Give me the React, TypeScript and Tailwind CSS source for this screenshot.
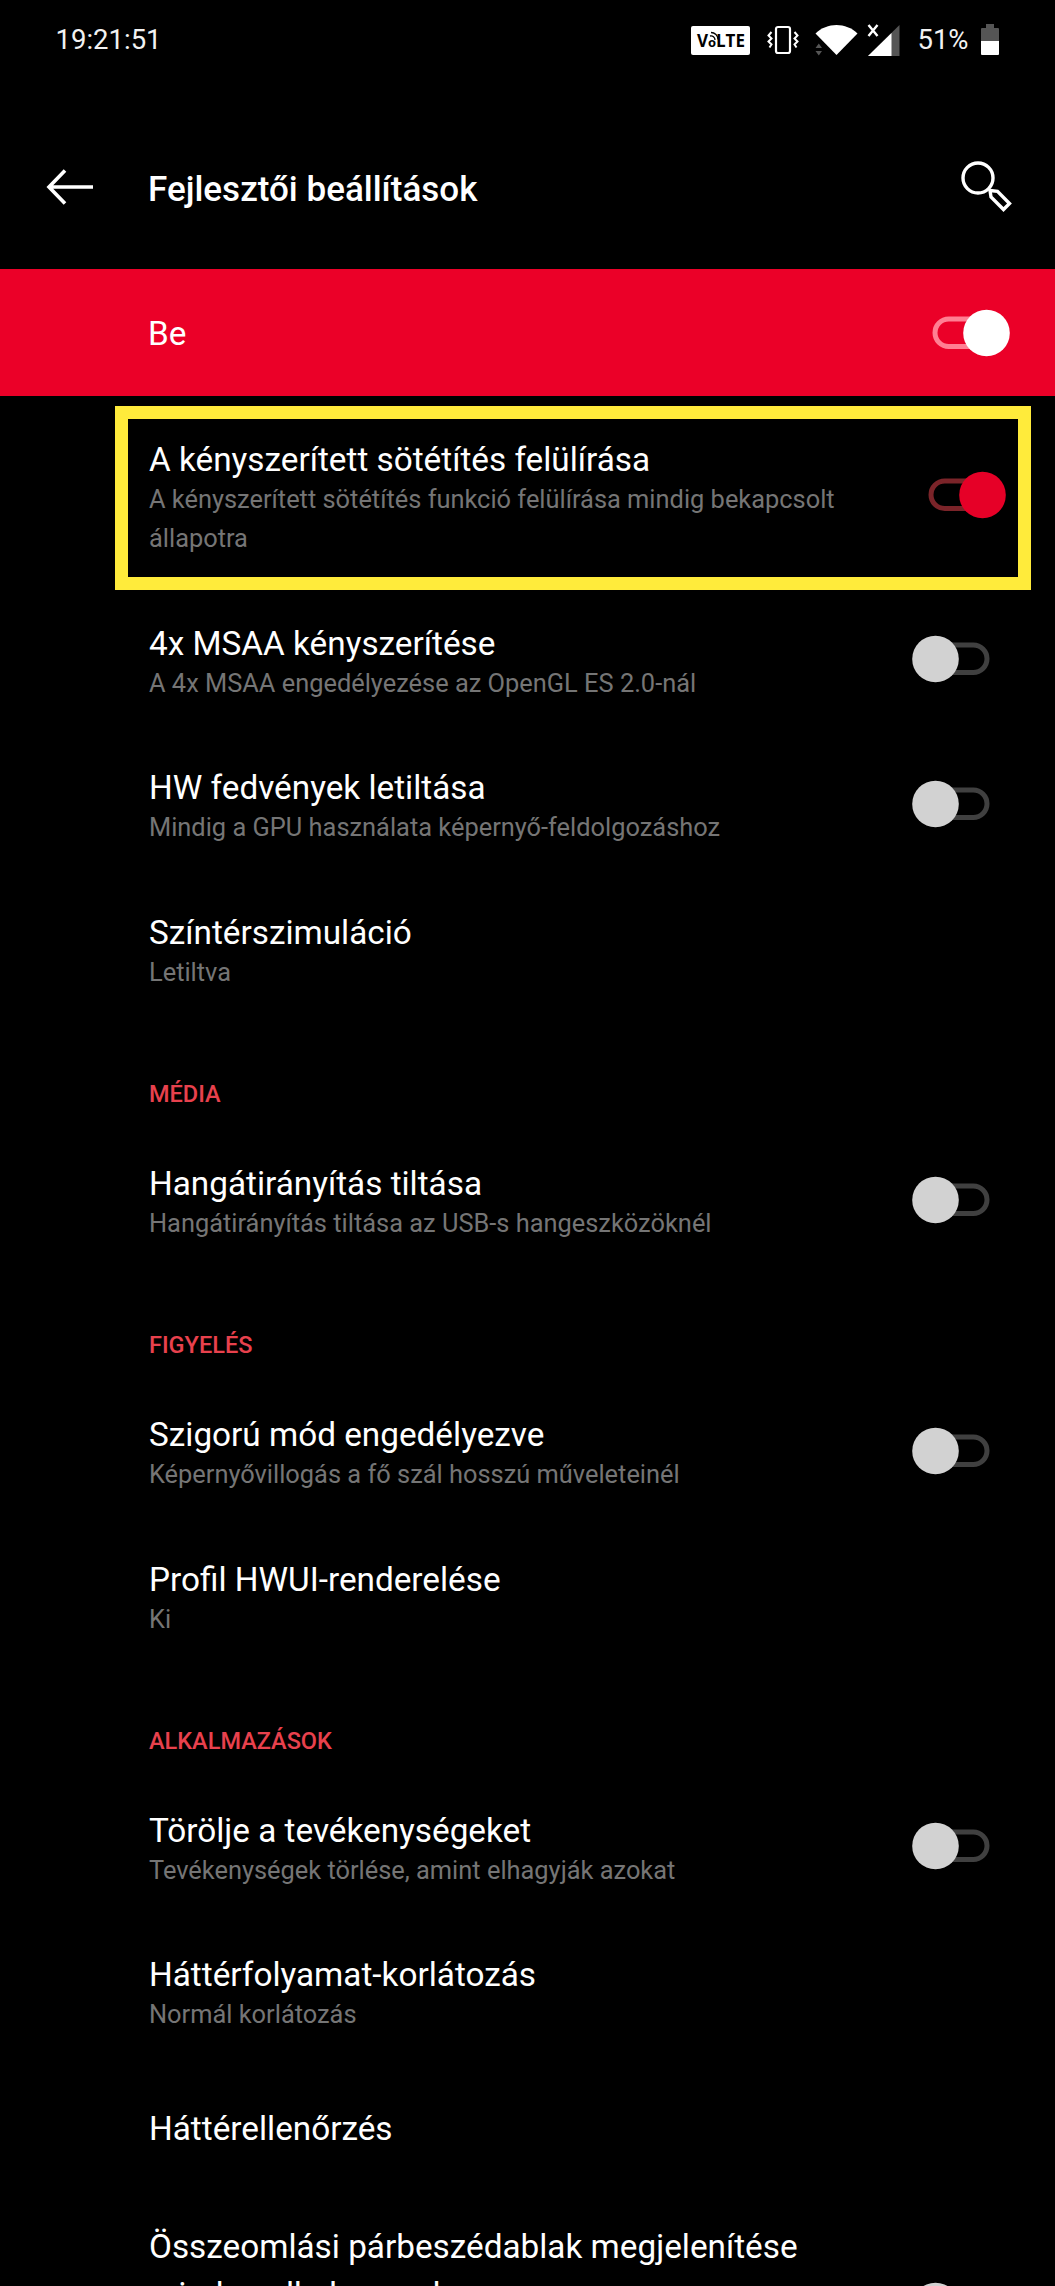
import { useState } from 'react'

type Item = {
  id: string
  title: string
  summary?: string
  toggle?: boolean
  tall?: boolean
}

type Section = {
  label?: string
  items: Item[]
}

const sections: Section[] = [
  {
    items: [
      {
        id: 'force-dark',
        title: 'A kényszerített sötétítés felülírása',
        summary: 'A kényszerített sötétítés funkció felülírása mindig bekapcsolt állapotra',
        toggle: true,
      },
      { id: 'msaa', title: '4x MSAA kényszerítése', summary: 'A 4x MSAA engedélyezése az OpenGL ES 2.0-nál', toggle: true },
      { id: 'hw', title: 'HW fedvények letiltása', summary: 'Mindig a GPU használata képernyő-feldolgozáshoz', toggle: true },
      { id: 'color', title: 'Színtérszimuláció', summary: 'Letiltva' },
    ],
  },
  {
    label: 'Média',
    items: [
      { id: 'usb', title: 'Hangátirányítás tiltása', summary: 'Hangátirányítás tiltása az USB-s hangeszközöknél', toggle: true },
    ],
  },
  {
    label: 'Figyelés',
    items: [
      { id: 'strict', title: 'Szigorú mód engedélyezve', summary: 'Képernyővillogás a fő szál hosszú műveleteinél', toggle: true },
      { id: 'hwui', title: 'Profil HWUI-renderelése', summary: 'Ki' },
    ],
  },
  {
    label: 'Alkalmazások',
    items: [
      { id: 'destroy', title: 'Törölje a tevékenységeket', summary: 'Tevékenységek törlése, amint elhagyják azokat', toggle: true },
      { id: 'bg-limit', title: 'Háttérfolyamat-korlátozás', summary: 'Normál korlátozás' },
      { id: 'bg-check', title: 'Háttérellenőrzés' },
      { id: 'crash', title: 'Összeomlási párbeszédablak megjelenítése minden alkalommal', toggle: true, tall: true },
    ],
  },
]

function Switch({ on, light, onClick }: { on: boolean; light?: boolean; onClick: () => void }) {
  const track = light ? '#ff7f93' : on ? '#7b2429' : '#404040'
  const thumb = light ? '#ffffff' : on ? '#e60027' : '#d2d2d2'
  const fill = light ? '#eb0028' : '#000000'
  return (
    <button role="switch" aria-checked={on} onClick={onClick} className="shrink-0">
      <svg width="94" height="48" viewBox="0 0 94 48" className="block">
        <rect x="19" y="10" width="56" height="27.5" rx="13.75" fill={fill} stroke={track} strokeWidth="5" />
        <circle cx={on ? 70.5 : 23.5} cy="24" r="23.3" fill={thumb} />
      </svg>
    </button>
  )
}

function StatusBar() {
  return (
    <div className="flex h-20 items-center justify-between pl-[55.5px] pr-[56.5px] text-[27.5px] text-[#f2f2f2]">
      <span>19:21:51</span>
      <div className="flex items-center">
        <span className="relative flex h-[29px] w-[59px] items-center justify-center rounded-[2px] bg-white font-['Open_Sans'] text-[17px] font-bold leading-none text-black">
          V<span className="pt-[5px] text-[13px]">o</span>LTE
          <svg width="12" height="10" viewBox="0 0 12 10" className="absolute left-[17px] top-[5px]" fill="none" stroke="#000" strokeWidth="1.3">
            <path d="M2 5a4 4 0 0 1 5 4M3 1.500a7 7 0 0 1 7 7" />
          </svg>
        </span>
        {/* vibrate */}
        <svg width="32" height="30" viewBox="0 0 32 30" className="ml-[17px]" fill="none" stroke="#fff" strokeWidth="2.2">
          <rect x="9" y="2" width="14" height="26" rx="2" />
          <path d="M4.500 7L1.500 10.500l3 3-3 3 3 3-2 3M27.500 7l3 3.500-3 3 3 3-3 3 2 3" strokeWidth="2" />
        </svg>
        {/* wifi */}
        <svg width="43" height="32" viewBox="0 0 43 32" className="ml-4">
          <path d="M0.500 9.500C12-2 31-2 42.500 9.500L21.500 31z" fill="#fff" />
          <path d="M0.500 24l3.300-4.500L7 24zM0.500 27l3.300 4.500L7 27z" fill="#555" />
        </svg>
        {/* signal */}
        <svg width="33" height="33" viewBox="0 0 33 33" className="ml-[9px]">
          <path d="M32.500 1v31H1z" fill="#555" />
          <path d="M24.500 9v23H1z" fill="#fff" />
          <path d="M1.500 1l9 11M10.500 1l-9 11" stroke="#fff" strokeWidth="2.4" />
        </svg>
        <span className="ml-[17px]">51%</span>
        <svg width="18" height="32" viewBox="0 0 18 32" className="ml-3">
          <path d="M5 0h8v4h4a1 1 0 0 1 1 1v12H0V5a1 1 0 0 1 1-1h4z" fill="#555" />
          <path d="M0 17h18v13a1 1 0 0 1-1 1H1a1 1 0 0 1-1-1z" fill="#fff" />
        </svg>
      </div>
    </div>
  )
}

function Row({ item, on, onToggle }: { item: Item; on: boolean; onToggle: () => void }) {
  return (
    <div
      className={
        item.tall
          ? 'flex h-[230px] items-center justify-between pl-[149px] pr-[49.5px]'
          : item.summary
            ? 'flex items-center justify-between py-[28.8px] pl-[149px] pr-[49.5px]'
            : 'flex h-[128px] items-center justify-between pl-[149px] pr-[49.5px]'
      }
    >
      <div className={item.tall ? 'w-[720px] self-start pt-[32px]' : item.summary ? 'w-[720px] pt-[4px]' : 'w-[720px] pt-[3px]'}>
        <div className="text-[33.3px] leading-[48px] text-white">{item.title}</div>
        {item.summary && <div className="-mt-[4px] text-[25.4px] leading-[39px] text-[#757575]">{item.summary}</div>}
      </div>
      {item.toggle && <Switch on={on} onClick={onToggle} />}
    </div>
  )
}

export default function App() {
  const [enabled, setEnabled] = useState(true)
  const [values, setValues] = useState<Record<string, boolean>>({ 'force-dark': true })

  const toggle = (id: string) => setValues((v) => ({ ...v, [id]: !v[id] }))

  return (
    <div className="relative h-[2286px] w-[1055px] overflow-hidden bg-black font-['Roboto',sans-serif]">
      <StatusBar />

      <header className="flex h-[189px] items-center pl-[46px] pr-[42px] pb-[1px]">
        <svg width="48" height="36" viewBox="0 0 48 36" className="mt-[25px]" fill="none" stroke="#fff" strokeWidth="3.6">
          <path d="M19 1.500L3 18l16 16.500M3 18h44" />
        </svg>
        <h1 className="ml-[54px] mt-[31px] flex-1 text-[35px] font-medium leading-[48px] text-white">Fejlesztői beállítások</h1>
        <svg width="54" height="54" viewBox="0 0 54 54" className="mt-[24px]" fill="none" stroke="#fff" strokeWidth="3.4">
          <circle cx="19" cy="19" r="15" />
          <path d="M31 31.500l7.500.8L50.500 44.500 44.500 50.500 32 38z" />
        </svg>
      </header>

      <div className="flex h-[127px] items-center justify-between bg-[#eb0028] pl-[148px] pr-[45px] text-[33.3px] text-white">
        <span className="pt-[2px]">Be</span>
        <Switch on={enabled} light onClick={() => setEnabled(!enabled)} />
      </div>

      <main className="pt-[7.5px]">
        {sections.map((s, i) => (
          <section key={i}>
            {s.label && (
              <h2 className="flex h-[106.4px] items-center pl-[149px] pt-[42px] text-[23.5px] font-medium uppercase text-[#e8414d]">
                {s.label}
              </h2>
            )}
            {s.items.map((item) => (
              <Row key={item.id} item={item} on={!!values[item.id]} onToggle={() => toggle(item.id)} />
            ))}
          </section>
        ))}
      </main>

      {/* highlight frame over the first setting */}
      <div className="pointer-events-none absolute left-[115px] top-[406px] h-[184px] w-[916px] border-[13px] border-[#ffeb3b]" />
    </div>
  )
}
